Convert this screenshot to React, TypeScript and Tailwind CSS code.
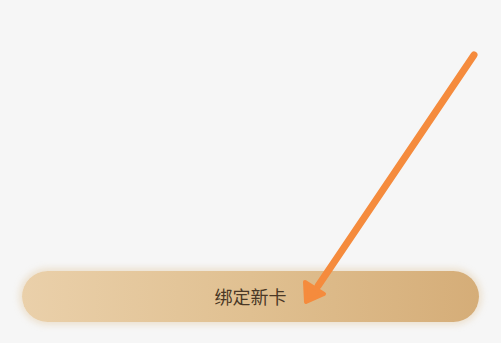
import React from "react";

export default function App() {
  return (
    <div className="relative w-[501px] h-[343px] bg-[#f6f6f6] overflow-hidden flex flex-col justify-end pb-[21px] px-[22px]">
      <button
        className="h-[51px] w-full rounded-full bg-gradient-to-r from-[#ead0aa] via-[#e0c091] to-[#d5ad78] flex items-center justify-center text-[18px] text-[#4a3826] shadow-[0_0_6px_3px_rgba(220,190,140,0.35)]"
        style={{ fontFamily: '"Noto Sans CJK SC", "Noto Sans", sans-serif' }}
      >
        绑定新卡
      </button>
      <svg
        className="absolute left-0 top-0"
        width="501"
        height="343"
        viewBox="0 0 501 343"
      >
        <line
          x1="474"
          y1="55"
          x2="318"
          y2="286"
          stroke="#f58b3d"
          strokeWidth="7"
          strokeLinecap="round"
        />
        <polygon points="306,302 305,282 324,294" fill="#f58b3d" stroke="#f58b3d" strokeWidth="4" strokeLinejoin="round" />
      </svg>
    </div>
  );
}
